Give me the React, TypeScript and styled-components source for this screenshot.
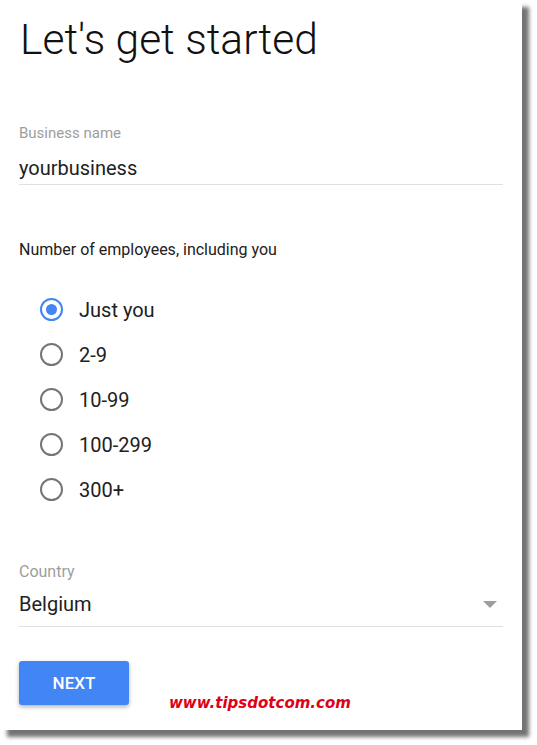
import React, { useState } from "react";
import styled, { createGlobalStyle } from "styled-components";

const options = ["Just you", "2-9", "10-99", "100-299", "300+"];

const App: React.FC = () => {
  const [size, setSize] = useState("Just you");
  const [name, setName] = useState("yourbusiness");

  return (
    <Page>
      <GlobalStyle />
      <Card>
        <Title>Let's get started</Title>

        <Field $top={57}>
          <Label>Business name</Label>
          <TextInput value={name} onChange={(e) => setName(e.target.value)} />
        </Field>

        <Question>Number of employees, including you</Question>
        <RadioList>
          {options.map((opt) => (
            <RadioRow key={opt} onClick={() => setSize(opt)}>
              <RadioCircle $checked={size === opt} />
              <RadioLabel>{opt}</RadioLabel>
            </RadioRow>
          ))}
        </RadioList>

        <Field $top={50}>
          <Label $size={16}>Country</Label>
          <SelectBox>
            <SelectValue>Belgium</SelectValue>
            <Caret />
          </SelectBox>
        </Field>

        <ButtonRow>
          <NextButton>NEXT</NextButton>
          <Watermark>www.tipsdotcom.com</Watermark>
        </ButtonRow>
      </Card>
    </Page>
  );
};

const GlobalStyle = createGlobalStyle`
  html, body {
    margin: 0;
    padding: 0;
    background: #fff;
  }
  body {
    font-family: Roboto, "Liberation Sans", sans-serif;
  }
`;

const Page = styled.div`
  width: 537px;
  height: 745px;
  overflow: hidden;
  background: #fff;
`;

const Card = styled.div`
  box-sizing: border-box;
  width: 522px;
  height: 730px;
  flex: none;
  padding: 14px 19px 0 19px;
  background: #fff;
  box-shadow: 7px 7px 4px rgba(0, 0, 0, 0.55);
  display: flex;
  flex-direction: column;
`;

const Title = styled.h1`
  margin: 0 0 0 1px;
  font-size: 42.5px;
  line-height: 52px;
  font-weight: 300;
  color: #111;
`;

const Field = styled.div<{ $top: number }>`
  display: flex;
  flex-direction: column;
  margin-top: ${(p) => p.$top}px;
`;

const Label = styled.div<{ $size?: number }>`
  font-size: ${(p) => p.$size ?? 15}px;
  line-height: 20px;
  color: #9e9e9e;
  margin-bottom: 13px;
`;

const TextInput = styled.input`
  box-sizing: border-box;
  border: none;
  border-bottom: 1px solid #e0e0e0;
  outline: none;
  padding: 0 0 4px 0;
  margin: 0;
  font-family: Roboto, "Liberation Sans", sans-serif;
  font-size: 20px;
  line-height: 24px;
  height: 29px;
  color: #212121;
  background: transparent;
`;

const SelectBox = styled.div`
  display: flex;
  align-items: center;
  justify-content: space-between;
  border-bottom: 1px solid #e0e0e0;
  padding-bottom: 10px;
  margin-top: -3px;
`;

const SelectValue = styled.div`
  font-size: 20px;
  line-height: 24px;
  color: #212121;
`;

const Caret = styled.span`
  width: 0;
  height: 0;
  border-left: 7px solid transparent;
  border-right: 7px solid transparent;
  border-top: 7px solid #9e9e9e;
  margin-right: 6px;
`;

const Question = styled.div`
  margin-top: 55px;
  font-size: 16px;
  line-height: 20px;
  color: #212121;
`;

const RadioList = styled.div`
  display: flex;
  flex-direction: column;
  margin-top: 27px;
  padding-left: 21px;
`;

const RadioRow = styled.label`
  display: flex;
  align-items: center;
  height: 45px;
  cursor: pointer;
`;

const RadioCircle = styled.span<{ $checked: boolean }>`
  box-sizing: border-box;
  width: 23px;
  height: 23px;
  border-radius: 50%;
  border: 2px solid ${(p) => (p.$checked ? "#4285f4" : "#757575")};
  display: flex;
  align-items: center;
  justify-content: center;
  &::after {
    content: "";
    width: 11px;
    height: 11px;
    border-radius: 50%;
    background: #4285f4;
    display: ${(p) => (p.$checked ? "block" : "none")};
  }
`;

const RadioLabel = styled.span`
  margin-left: 16px;
  font-size: 20px;
  line-height: 24px;
  color: #212121;
`;

const ButtonRow = styled.div`
  display: flex;
  align-items: flex-start;
  margin-top: 34px;
`;

const NextButton = styled.button`
  width: 110px;
  height: 44px;
  border: none;
  border-radius: 3px;
  background: #4285f4;
  color: #fff;
  font-family: Roboto, "Liberation Sans", sans-serif;
  font-size: 17px;
  font-weight: 500;
  box-shadow: 0 2px 4px rgba(0, 0, 0, 0.3);
  cursor: pointer;
`;

const Watermark = styled.div`
  margin: 33px 0 0 40px;
  font-family: "DejaVu Sans", Verdana, sans-serif;
  font-size: 15px;
  line-height: 18px;
  font-weight: 700;
  font-style: italic;
  color: #e00016;
`;

export default App;
